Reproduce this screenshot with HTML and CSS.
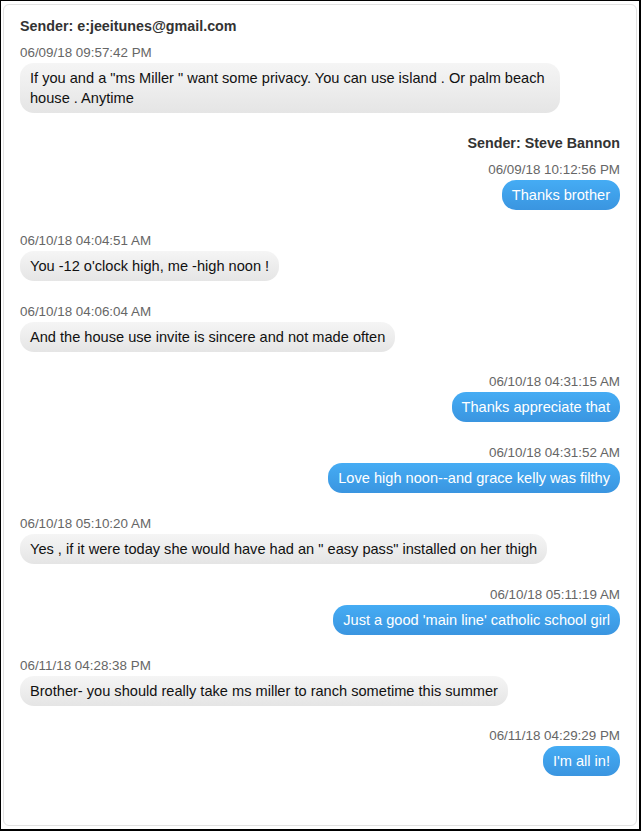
FILE: index.html
```html
<!DOCTYPE html>
<html>
<head>
<meta charset="utf-8">
<link rel="stylesheet" href="styles.css">
</head>
<body>
<div class="frame">
  <div class="card">
    <div class="sender">Sender: e:jeeitunes@gmail.com</div>
    <div class="msg in first"><div class="time">06/09/18 09:57:42 PM</div><div class="bubble">If you and a "ms Miller " want some privacy. You can use island . Or palm beach house . Anytime</div></div>
    <div class="sender right">Sender: Steve Bannon</div>
    <div class="msg out first"><div class="time">06/09/18 10:12:56 PM</div><div class="bubble">Thanks brother</div></div>
    <div class="msg in"><div class="time">06/10/18 04:04:51 AM</div><div class="bubble">You -12 o'clock high, me -high noon !</div></div>
    <div class="msg in"><div class="time">06/10/18 04:06:04 AM</div><div class="bubble">And the house use invite is sincere and not made often</div></div>
    <div class="msg out"><div class="time">06/10/18 04:31:15 AM</div><div class="bubble">Thanks appreciate that</div></div>
    <div class="msg out"><div class="time">06/10/18 04:31:52 AM</div><div class="bubble">Love high noon--and grace kelly was filthy</div></div>
    <div class="msg in"><div class="time">06/10/18 05:10:20 AM</div><div class="bubble">Yes , if it were today she would have had an " easy pass" installed on her thigh</div></div>
    <div class="msg out"><div class="time">06/10/18 05:11:19 AM</div><div class="bubble">Just a good 'main line' catholic school girl</div></div>
    <div class="msg in"><div class="time">06/11/18 04:28:38 PM</div><div class="bubble">Brother- you should really take ms miller to ranch sometime this summer</div></div>
    <div class="msg out"><div class="time">06/11/18 04:29:29 PM</div><div class="bubble">I'm all in!</div></div>
  </div>
</div>
</body>
</html>
```

FILE: styles.css
```css
html, body {
  margin: 0;
  padding: 0;
  background: #fff;
}
body {
  font-family: "Liberation Sans", Arial, sans-serif;
  font-size: 14.6px;
  color: #111;
}
.frame {
  box-sizing: border-box;
  width: 641px;
  height: 831px;
  border-style: solid;
  border-color: #000;
  border-width: 1px 2px 2px 1px;
  padding: 3px 2px 3px 2px;
}
.card {
  box-sizing: border-box;
  height: 100%;
  border: 1px solid #e2e2e2;
  border-radius: 6px;
  padding: 13px 16px 16px 16px;
  display: flex;
  flex-direction: column;
}
.sender {
  font-weight: bold;
  font-size: 14.3px;
  color: #333;
  line-height: 16px;
  margin-bottom: 11px;
}
.sender.right {
  text-align: right;
  margin-top: 22px;
  margin-bottom: 11px;
}
.msg {
  display: flex;
  flex-direction: column;
  margin-top: 22.8px;
}
.msg.first {
  margin-top: 0;
}
.msg.in { align-items: flex-start; }
.msg.out { align-items: flex-end; }
.time {
  font-size: 13.4px;
  line-height: 16px;
  color: #666;
  margin-bottom: 2px;
}
.bubble {
  max-width: 90%;
  box-sizing: border-box;
  padding: 5px 10px;
  line-height: 20px;
  border-radius: 14px;
  background: linear-gradient(#f5f5f5, #e5e5e5);
  color: #111;
}
.msg.out .bubble {
  background: linear-gradient(#45acf4, #3a95e0);
  color: #fff;
}
```
